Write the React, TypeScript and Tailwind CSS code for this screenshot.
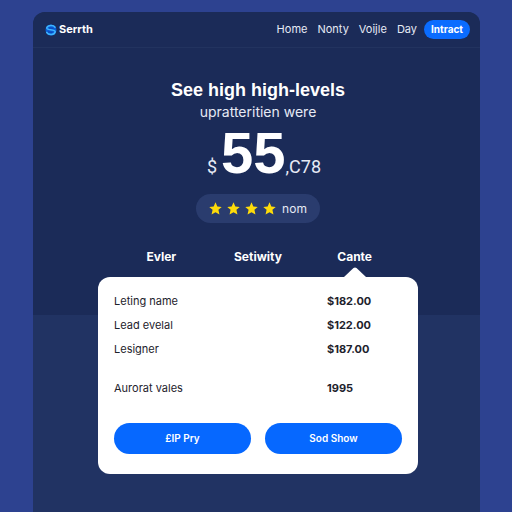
import React, { useState } from "react";

const links = ["Home", "Nonty", "Voijle", "Day"];

const tabs = ["Evler", "Setiwity", "Cante"];

const rows = [
  { label: "Leting name", value: "$182.00" },
  { label: "Lead evelal", value: "$122.00" },
  { label: "Lesigner", value: "$187.00" },
];

function Logo() {
  return (
    <svg viewBox="0 0 24 24" className="h-3 w-3" aria-hidden="true">
      <circle cx="12" cy="12" r="11" fill="#0b5fd8" />
      <path
        d="M20 6.500C17 1.500 6 1.500 3.500 7.500C2 13 20 9.500 20.500 15.500C19 22.500 7 22.500 3.500 17"
        fill="none"
        stroke="#3db4ff"
        strokeWidth="3"
        strokeLinecap="round"
      />
      <path d="M8 8L17 8.500M6 16L15 16.500" stroke="#0b3fb0" strokeWidth="2" />
    </svg>
  );
}

function Star() {
  return (
    <svg viewBox="0 0 24 24" className="h-[13px] w-[13px]" aria-hidden="true">
      <path
        d="M12 0.500l3.400 7.700 8.100.8-6.100 5.500 1.900 8.500L12 18.800l-7.300 4.200 1.900-8.500L0.500 9l8.100-.8z"
        fill="#fddb0a"
      />
    </svg>
  );
}

function Header() {
  return (
    <header className="flex h-9 items-center justify-between border-b border-[#22335f] pr-[10px] pl-3">
      <a href="#" className="flex items-center gap-[2px] text-[11px] font-bold">
        <Logo />
        Serrth
      </a>
      <nav className="flex items-center gap-[7px]">
        <div className="flex gap-[10px] text-[11px] text-[#e6eaf5]">
          {links.map((link) => (
            <a href="#" key={link}>
              {link}
            </a>
          ))}
        </div>
        <button className="h-[19px] rounded-full bg-[#0a6cff] px-[7px] text-[10px] font-bold">
          Intract
        </button>
      </nav>
    </header>
  );
}

function Rating() {
  return (
    <div className="mt-3 flex h-[29px] items-center gap-[6px] rounded-full bg-[#2a3c6e] px-[13px]">
      <div className="flex gap-[5px]">
        {[0, 1, 2, 3].map((i) => (
          <Star key={i} />
        ))}
      </div>
      <span className="text-xs text-[#e6eaf5]">nom</span>
    </div>
  );
}

function Card() {
  return (
    <div className="relative w-80 max-w-full rounded-xl bg-white px-4 pt-3 pb-5 text-[#1d222c]">
      <table className="w-full table-fixed text-left text-[11px]">
        <tbody>
          {rows.map((row) => (
            <tr key={row.label} className="h-6">
              <th scope="row" className="font-normal">
                {row.label}
              </th>
              <td className="w-[75px] font-bold">{row.value}</td>
            </tr>
          ))}
          <tr className="h-[54px]">
            <th scope="row" className="font-normal">
              Aurorat vales
            </th>
            <td className="font-bold">1995</td>
          </tr>
        </tbody>
      </table>
      <div className="mt-2 grid grid-cols-2 gap-[14px] text-[10px] font-semibold text-white">
        <button className="h-[31px] rounded-full bg-[#0668ff]">£IP Pry</button>
        <button className="h-[31px] rounded-full bg-[#0668ff]">Sod Show</button>
      </div>
    </div>
  );
}

export default function App() {
  const [active, setActive] = useState("Cante");

  return (
    <div className="flex min-h-screen flex-col bg-[#2d4290] pt-3 pr-8 pl-[33px] font-['Inter','Liberation_Sans',sans-serif] text-white">
      <div className="flex flex-1 flex-col overflow-hidden rounded-t-xl bg-[#213363]">
        <div className="bg-[#1b2b58]">
          <Header />
          <main className="flex flex-col items-center pt-[30px] pb-12 pl-[3px]">
            <h1 className="font-['Liberation_Sans',sans-serif] text-lg leading-6 font-bold">
              See high high-levels
            </h1>
            <p className="text-sm leading-5 text-[#e6eaf5]">upratteritien were</p>
            <div className="mt-[2px] flex items-baseline pl-3 font-['Roboto',sans-serif] text-lg leading-none text-[#e6eaf5]">
              <span className="mr-1">$</span>
              <span className="font-['Liberation_Sans',sans-serif] text-[58px] font-bold text-white">
                55
              </span>
              <span>,C78</span>
            </div>
            <Rating />
            <div className="mt-6 grid w-[290px] grid-cols-3 text-xs font-bold">
              {tabs.map((tab) => (
                <button
                  key={tab}
                  onClick={() => setActive(tab)}
                  className="relative h-5"
                >
                  {tab}
                  {active === tab && (
                    <svg
                      viewBox="0 0 22 10"
                      className="absolute top-full left-1/2 h-[10px] w-[22px] -translate-x-1/2"
                      aria-hidden="true"
                    >
                      <path d="M0 10L9.500 1Q11 0 12.500 1L22 10z" fill="#fff" />
                    </svg>
                  )}
                </button>
              ))}
            </div>
          </main>
        </div>
        <section className="flex flex-col items-center pb-9 pl-[3px]">
          <div className="-mt-[38px] max-w-full">
            <Card />
          </div>
        </section>
      </div>
    </div>
  );
}
